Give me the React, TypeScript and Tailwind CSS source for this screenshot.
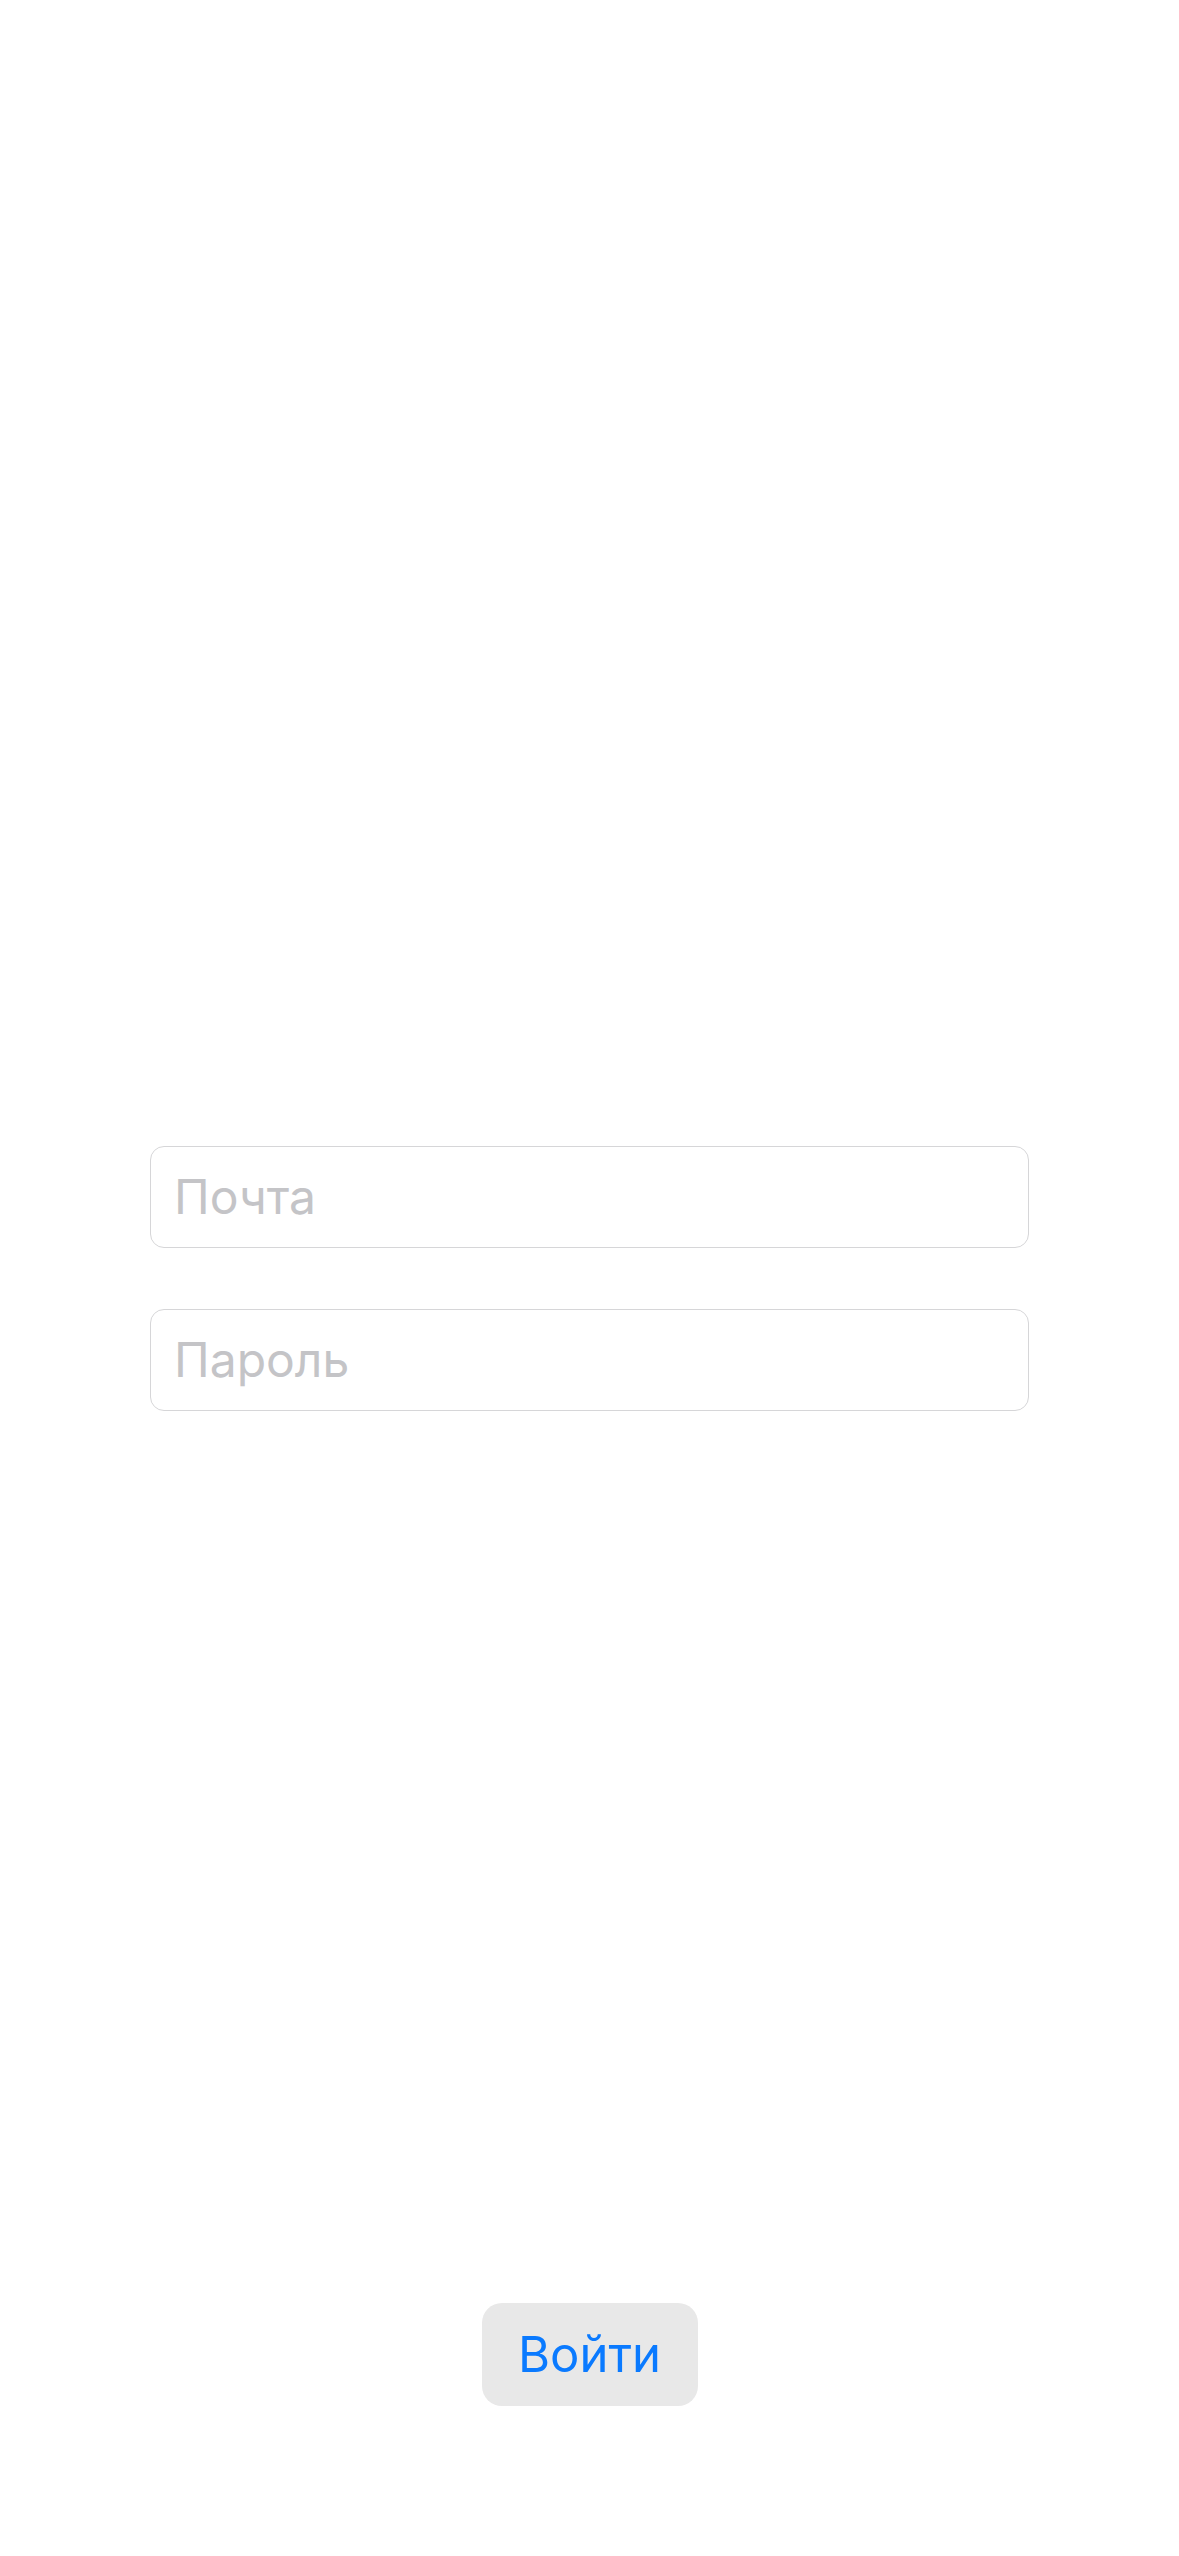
import { useState } from 'react';

// ── Поле ввода ──────────────────────────────────────────────

function Field({
  placeholder,
  type = 'text',
}: {
  placeholder: string;
  type?: string;
}) {
  const [value, setValue] = useState('');
  return (
    <input
      type={type}
      value={value}
      onChange={(e) => setValue(e.target.value)}
      placeholder={placeholder}
      className="h-[102px] w-full rounded-[14px] border-[1.5px] border-[#d6d6d8] bg-white px-[23px] text-[48px] text-black outline-none placeholder:text-[#c4c4c7]"
      style={{ fontFamily: 'Inter, "Noto Sans", sans-serif' }}
    />
  );
}

// ── Экран входа ─────────────────────────────────────────────

export default function App() {
  return (
    <div
      className="flex h-[2556px] w-full flex-col bg-white"
      style={{ fontFamily: 'Inter, "Noto Sans", sans-serif' }}
    >
      {/* зеркальный отступ под кнопку, чтобы поля стояли по центру */}
      <div className="h-[253px] shrink-0" />
      <div className="flex-1" />
      <div className="flex flex-col gap-[61px] px-[150px]">
        <Field placeholder="Почта" type="email" />
        <Field placeholder="Пароль" type="password" />
      </div>
      <div className="flex-1" />
      <div className="flex shrink-0 justify-center pb-[150px]">
        <button className="h-[103px] w-[216px] rounded-[20px] bg-[#e8e8e8] text-[49px] text-[#0a7aff]">
          Войти
        </button>
      </div>
    </div>
  );
}
